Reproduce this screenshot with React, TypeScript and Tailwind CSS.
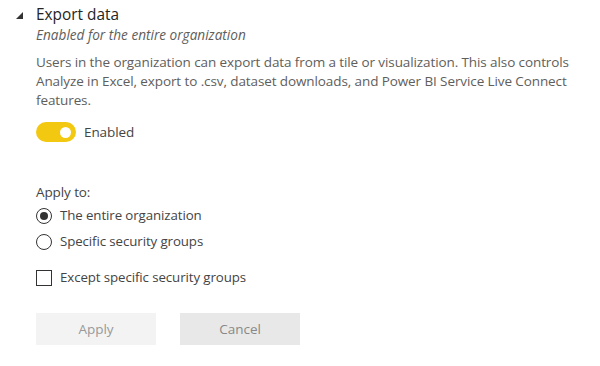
export default function App() {
  return (
    <div className="w-[600px] h-[366px] bg-white text-[#333] overflow-hidden" style={{ fontFamily: '"Open Sans", "Noto Sans", sans-serif' }}>
      <div className="flex pt-[5px]">
        <div className="w-[36px] flex justify-start pl-[16px] pt-[7px]">
          <svg width="7" height="7" viewBox="0 0 7 7"><polygon points="7,0 7,7 0,7" fill="#333" /></svg>
        </div>
        <div className="flex flex-col w-[540px]">
          <div className="text-[15.4px] leading-[20px] text-[#252423]">Export data</div>
          <div className="text-[13.6px] leading-[18px] italic text-[#605e5c] mt-[1px]">Enabled for the entire organization</div>
          <div className="text-[13.5px] leading-[19px] text-[#605e5c] mt-[9px] tracking-[-0.1px]">
            Users in the organization can export data from a tile or visualization. This also controls Analyze in Excel, export to .csv, dataset downloads, and Power BI Service Live Connect features.
          </div>
          <div className="flex items-center mt-[12px] gap-[8px]">
            <div className="w-[40px] h-[20px] rounded-full bg-[#f2c811] flex items-center justify-end pr-[5px]">
              <div className="w-[11px] h-[11px] rounded-full bg-white" />
            </div>
            <span className="text-[13.5px] tracking-[-0.1px] text-[#444]">Enabled</span>
          </div>
          <div className="text-[13.5px] tracking-[-0.1px] leading-[20px] text-[#444] mt-[40px]">Apply to:</div>
          <div className="flex items-center gap-[8px] mt-[3px] h-[22px]">
            <div className="w-[16px] h-[16px] rounded-full border border-[#333] flex items-center justify-center">
              <div className="w-[8px] h-[8px] rounded-full bg-[#333]" />
            </div>
            <span className="text-[13.3px] tracking-[-0.1px] text-[#444]">The entire organization</span>
          </div>
          <div className="flex items-center gap-[8px] mt-[4px] h-[22px]">
            <div className="w-[16px] h-[16px] rounded-full border border-[#333]" />
            <span className="text-[13.3px] tracking-[-0.1px] text-[#444]">Specific security groups</span>
          </div>
          <div className="flex items-center gap-[8px] mt-[14px] h-[22px]">
            <div className="w-[16px] h-[16px] border border-[#333]" />
            <span className="text-[13.3px] tracking-[-0.1px] text-[#444]">Except specific security groups</span>
          </div>
          <div className="flex gap-[24px] mt-[24px]">
            <div className="w-[120px] h-[32px] bg-[#f3f3f3] flex items-center justify-center text-[13.5px] text-[#999]">Apply</div>
            <div className="w-[120px] h-[32px] bg-[#e8e8e8] flex items-center justify-center text-[13.5px] text-[#888]">Cancel</div>
          </div>
        </div>
      </div>
    </div>
  );
}
